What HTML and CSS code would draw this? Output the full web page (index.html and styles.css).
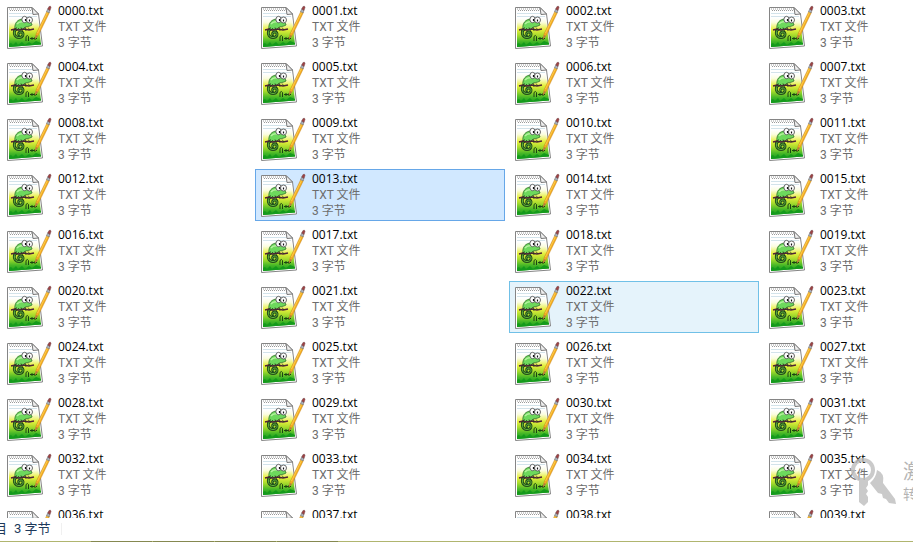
FILE: index.html
```html
<!DOCTYPE html>
<html lang="zh-CN">
<head>
    <meta charset="UTF-8">
    <meta name="viewport" content="width=device-width, initial-scale=1.0">
    <title>文件</title>
    <link rel="stylesheet" href="styles.css">
</head>
<body>
    <!-- Shared file icon -->
    <svg class="icon-defs" aria-hidden="true">
        <defs>
            <linearGradient id="grass" x1="0" y1="0" x2="0" y2="1">
                <stop offset="0" stop-color="#ffffff"/>
                <stop offset="0.15" stop-color="#fbfde0"/>
                <stop offset="0.4" stop-color="#e6ef3c"/>
                <stop offset="0.6" stop-color="#a4da2c"/>
                <stop offset="0.8" stop-color="#48b828"/>
                <stop offset="1" stop-color="#129a1a"/>
            </linearGradient>
        </defs>
        <symbol id="txt-icon" viewBox="0 0 48 48">
            <path d="M3.5 4.5H28L34.5 11L38.5 43L3.5 45.5Z" fill="#fff" stroke="#858585"/>
            <path d="M5 6H28M6 7.5H28" stroke="#9a9a9a" stroke-dasharray="1 1" fill="none"/>
            <path d="M5 10.5H32M5 13.5H33M5 16.5H33" stroke="#d3e3ea" fill="none"/>
            <path d="M28 4.5L29 11.5L34.5 11Z" fill="#eee" stroke="#777"/>
            <path d="M5 15H34L37 41.5L5 44Z" fill="url(#grass)"/>
            <path d="M5 41L7 40L9 42L12 39L14 42L18 39L21 42L25 39L28 41L32 38L37 40V41.5L5 44Z" fill="#159a1c"/>
            <!-- chameleon -->
            <path d="M11 26C10 20 14 16 19 16C23 18 28 19 28 22C25 24 22 23 20 25C18 28 14 28 11 26Z" fill="#6dd85c" stroke="#2f7029" stroke-width="0.8"/>
            <path d="M13 21C15 18.5 17 18.5 19 19" stroke="#b4f29d" stroke-width="1.5" fill="none"/>
            <path d="M12 26C9 29 10 34.5 15 34.5C20 34.5 20 29 17 29C14 29 14 32 16 32" stroke="#204a1a" stroke-width="2.8" fill="none"/>
            <path d="M12 26C9 29 10 34.5 15 34.5C20 34.5 20 29 17 29C14 29 14 32 16 32" stroke="#62b83c" stroke-width="1" fill="none"/>
            <path d="M7 27L11 26L14 27L20 26L25 27L30 26" stroke="#502438" stroke-width="1.5" fill="none"/>
            <path d="M9 28L13 24.5M12 28L15 25M17 24.5L19 29M21 24L22 28M24 24.5L26 27" stroke="#253c1b" stroke-width="0.8" fill="none"/>
            <ellipse cx="20.5" cy="16.5" rx="2.6" ry="3.2" fill="#fff" stroke="#444" stroke-width="0.8"/>
            <ellipse cx="25.5" cy="17" rx="3" ry="3" fill="#fff" stroke="#444" stroke-width="0.8"/>
            <path d="M21.5 16V18M25.5 16.5V18.5" stroke="#111" stroke-width="1.2"/>
            <path d="M22 38V33.5Q23.5 31.5 24.5 33.5V38M26 35.5H33M28 34V37M31 34V37" stroke="#1c4412" stroke-width="1" fill="none"/>
            <!-- pencil -->
            <path d="M31 36L32 31L43 8L45.5 9.5L34.5 32Z" fill="#f4ad21" stroke="#b87a1c" stroke-width="0.4"/>
            <path d="M33.5 30L43.7 9" stroke="#ffd75b" stroke-width="0.7" fill="none"/>
            <path d="M31 36L32 32L34 33Z" fill="#b17b43"/>
            <path d="M42.5 8.5L43.7 6L46 7.5L45 10Z" fill="#aab0b8" stroke="#646a75" stroke-width="0.5"/>
            <path d="M43.7 6L45 3.5Q47 2.5 47 4.5L46 7.5Z" fill="#9e4142" stroke="#70474a" stroke-width="0.5"/>
        </symbol>
    </svg>

    <div class="explorer">
        <main class="file-pane">
            <ul class="file-list" id="file-list"></ul>
        </main>

        <footer class="status-bar">
            <span class="status-count">目</span>
            <span class="status-size">3 字节</span>
        </footer>

        <div class="taskbar-edge"><span></span><span></span><span></span><span></span></div>

        <!-- Activation notice -->
        <div class="activation">
            <svg class="keys" viewBox="0 0 46 52" aria-hidden="true">
                <path d="M27 14Q35 17 33 27L45 43L46 48L39 47L36 43L33 42L32 38L28 37L20 27Q26 22 27 14Z"/>
                <path fill-rule="evenodd" d="M13 2C20 2 25 7 25 14C25 19 22 23 18 25V29L16 32L18 35L16 38L18 41V46L14 50L9 46V25C4 23 1 19 1 14C1 7 6 2 13 2ZM13 6A8 8 0 0 0 13 22A8 8 0 0 0 13 6Z"/>
            </svg>
            <div class="activation-text">
                <div class="activation-title">激</div>
                <div class="activation-note">转</div>
            </div>
        </div>
    </div>

    <script>
        const FILE_COUNT = 40;
        const SELECTED = 13;
        const HOVERED = 22;

        // Build the tiles
        const list = document.getElementById('file-list');
        for (let i = 0; i < FILE_COUNT; i++) {
            const item = document.createElement('li');
            item.className = 'file';
            if (i === SELECTED) item.classList.add('selected');
            if (i === HOVERED) item.classList.add('hovered');
            item.innerHTML = `
                <svg class="file-icon" aria-hidden="true"><use href="#txt-icon"/></svg>
                <div class="file-info">
                    <div class="file-name">${String(i).padStart(4, '0')}.txt</div>
                    <div>TXT 文件</div>
                    <div>3 字节</div>
                </div>`;
            list.appendChild(item);
        }
    </script>
</body>
</html>
```
FILE: styles.css
```css
/* General */
* { box-sizing: border-box; }
body { margin: 0; background-color: #fff; font-family: Roboto, "Noto Sans CJK SC", sans-serif; font-size: 12px; line-height: 16px; color: #6d6d6d; }
.icon-defs { position: absolute; width: 0; height: 0; }
.explorer { position: relative; display: flex; flex-direction: column; height: 100vh; overflow: hidden; }

/* File tiles */
.file-pane { flex: 1; min-height: 0; overflow: hidden; }
.file-list { display: grid; grid-template-columns: repeat(4, 250px); gap: 4px; margin: 0; padding: 1px; list-style: none; }
.file { display: flex; gap: 6px; height: 52px; padding: 1px 2px; border: 1px solid transparent; }
.file.selected { background-color: #d1e8ff; border-color: #66a7e8; }
.file.hovered { background-color: #e5f3fb; border-color: #70c0e7; }
.file-icon { flex: none; width: 48px; height: 48px; }
.file-name { font-family: "Open Sans", sans-serif; color: #000; }

/* Status bar */
.status-bar { display: flex; align-items: center; height: 23px; padding-bottom: 2px; font-size: 13px; color: #1e395b; }
.status-count { margin-left: -6px; }
.status-size { margin-left: 7px; padding-right: 10px; border-right: 1px solid #f0f0f0; line-height: 12px; }

/* Taskbar edge */
.taskbar-edge { display: flex; gap: 1px; height: 1px; padding-left: 91px; background-color: #b0b56f; }
.taskbar-edge span { width: 61px; background-color: #858850; }

/* Activation notice */
.activation { position: absolute; right: 0; bottom: 34px; display: flex; gap: 7px; color: #b4b4b4; }
.keys { width: 46px; height: 52px; fill: #bdbdbd; opacity: 0.8; }
.activation-text { width: 10px; overflow: hidden; white-space: nowrap; }
.activation-title { font-size: 20px; line-height: 32px; }
.activation-note { font-size: 14px; line-height: 12px; }
```
